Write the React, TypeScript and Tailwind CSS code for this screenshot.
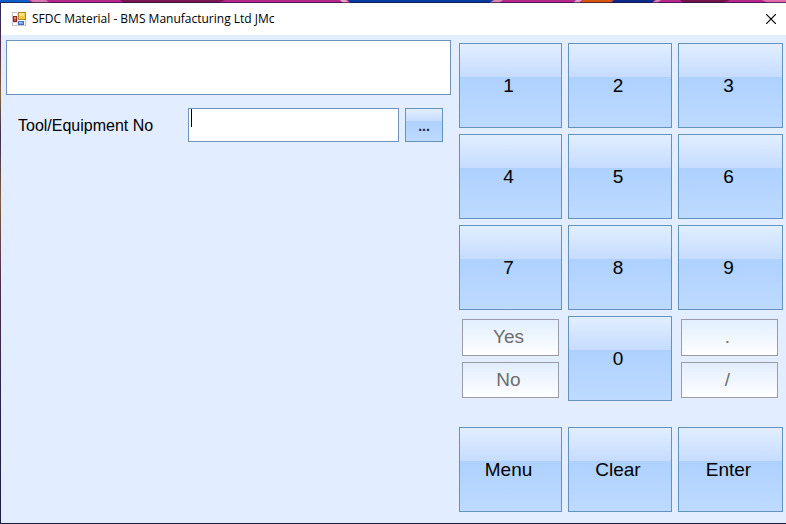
import { useState } from 'react';

const digits = ['1', '2', '3', '4', '5', '6', '7', '8', '9'];

const keyClass =
  'h-[85px] border border-[#6593c0] bg-[linear-gradient(to_bottom,#e1efff_0%,#c6dcff_40%,#aed1ff_40%,#bedaff_100%)] pt-0.5 pr-1 text-[19px] text-black active:brightness-95';

const disabledKeyClass =
  'flex-1 border border-[#9a9da3] bg-linear-to-b from-[#e1eeff] to-white pr-1 text-[19px] text-[#6d6d6d]';

const keyRowClass = 'grid grid-cols-[103fr_104fr_105fr] gap-1.5';

function AppIcon() {
  return (
    <svg className="h-3.5 w-3.5" viewBox="0 0 14 14" aria-hidden="true">
      <rect x="0.5" y="0.5" width="13" height="13" fill="#fff" stroke="#c4c4c4" />
      <path d="M5.5 0V14M0 10.5H5" fill="none" stroke="#dcdcdc" />
      <rect x="6.5" y="0.5" width="7" height="7" fill="#f7c93e" stroke="#b08a28" />
      <rect x="7" y="1" width="5" height="3" fill="#ffe383" />
      <rect x="1.5" y="4.5" width="3" height="5" fill="#d8483a" stroke="#8e2a20" />
      <rect x="2" y="5" width="2" height="2" fill="#f08a78" />
      <rect x="6.5" y="9.5" width="5" height="3" fill="#6ea6ee" stroke="#4272c4" />
      <rect x="7" y="10" width="3" height="1" fill="#a9cbf7" />
    </svg>
  );
}

function TitleBar() {
  return (
    <header className="flex h-8 items-center bg-white pr-2.5 pl-[11px]">
      <AppIcon />
      <h1 className="ml-1.5 font-['Open_Sans','Noto_Sans',sans-serif] text-xs text-black">
        SFDC Material - BMS Manufacturing Ltd JMc
      </h1>
      <button type="button" aria-label="Close" className="ml-auto">
        <svg className="h-2.5 w-2.5" viewBox="0 0 10 10" aria-hidden="true">
          <path d="M0 0L10 10M10 0L0 10" stroke="#000" strokeWidth="1.2" />
        </svg>
      </button>
    </header>
  );
}

// strip of wallpaper showing above the window
function DesktopEdge() {
  return (
    <svg className="block h-[3px] w-full" viewBox="0 0 786 3" preserveAspectRatio="none" aria-hidden="true">
      <rect width="786" height="3" fill="#b8268c" />
      <path d="M0 0H28L32 3H0Z" fill="#0a5fcb" />
      <path d="M30 0H46L50 3H34Z" fill="#d978b0" />
      <path d="M120 0H225L218 3H124Z" fill="#7d1552" />
      <path d="M340 0H346L350 3H343Z" fill="#e9a3c8" />
      <path d="M348 0H494L489 3H351Z" fill="#053ba0" />
      <path d="M494 0H503L499 3H489Z" fill="#d884b4" />
      <path d="M576 0H582L579 3H573Z" fill="#e39ac4" />
      <path d="M583 0H613L610 3H580Z" fill="#d8560c" />
      <path d="M614 0H655L651 3H611Z" fill="#0b2b8c" />
      <path d="M656 0H661L657 3H652Z" fill="#d884b4" />
      <path d="M680 0H730L722 3H684Z" fill="#74104a" />
      <path d="M762 0H786V3H768Z" fill="#e26cae" />
      <rect y="2" width="786" height="1" fill="#1c1438" fillOpacity="0.7" />
    </svg>
  );
}

function App() {
  const [toolNo, setToolNo] = useState('');

  return (
    <div className="flex min-h-screen flex-col border-b border-[#1d1c44] bg-[linear-gradient(to_bottom,#1f2b5c_0%,#4a2a4a_8%,#7d6440_18%,#3a2f52_26%,#7a5c42_38%,#4c2c4c_55%,#2a2450_75%,#1d1c44_100%)] font-['Liberation_Sans',Arial,sans-serif]">
      <DesktopEdge />
      <div className="ml-px flex flex-1 flex-col bg-[#e2eeff]">
        <TitleBar />
        <div className="grid flex-1 grid-cols-[minmax(0,445fr)_minmax(0,324fr)] gap-2 pr-[3px] pl-[5px]">
          <main className="pt-[5px]">
            <output aria-label="Message" className="block h-[55px] border border-[#7093bd] bg-white" />
            <div className="mt-[13px] flex items-center pr-2 pl-3">
              <label htmlFor="tool-no" className="w-[170px] pt-0.5 text-base text-black">
                Tool/Equipment No
              </label>
              <div className="flex h-[34px] min-w-0 flex-1 border border-[#7093bd] bg-white px-0.5">
                <span className="h-[18px] w-px bg-black" />
                <input
                  id="tool-no"
                  type="text"
                  value={toolNo}
                  onChange={(e) => setToolNo(e.target.value)}
                  className="min-w-0 flex-1 text-base outline-none"
                />
              </div>
              <button
                type="button"
                className="ml-1.5 h-[34px] w-[38px] border border-[#6593c0] bg-[linear-gradient(to_bottom,#e1efff_0%,#c6dcff_38%,#aed1ff_38%,#bedaff_100%)] pt-0.5 text-sm font-bold text-[#1b2746]"
              >
                ...
              </button>
            </div>
          </main>

          <section aria-label="Keypad" className="pt-2 pb-[11px]">
            <div className={keyRowClass}>
              {digits.map((digit) => (
                <button
                  key={digit}
                  type="button"
                  className={keyClass}
                  onClick={() => setToolNo(toolNo + digit)}
                >
                  {digit}
                </button>
              ))}
              <div className="flex flex-col gap-1.5 p-[3px]">
                <button type="button" disabled className={disabledKeyClass}>Yes</button>
                <button type="button" disabled className={disabledKeyClass}>No</button>
              </div>
              <button type="button" className={keyClass} onClick={() => setToolNo(toolNo + '0')}>
                0
              </button>
              <div className="flex flex-col gap-1.5 py-[3px] pr-[5px] pl-[3px]">
                <button type="button" disabled className={disabledKeyClass}>.</button>
                <button type="button" disabled className={disabledKeyClass}>/</button>
              </div>
            </div>
            <div className={`mt-[26px] ${keyRowClass}`}>
              <button type="button" className={keyClass}>Menu</button>
              <button type="button" className={keyClass} onClick={() => setToolNo('')}>Clear</button>
              <button type="button" className={keyClass}>Enter</button>
            </div>
          </section>
        </div>
      </div>
    </div>
  );
}

export default App;
